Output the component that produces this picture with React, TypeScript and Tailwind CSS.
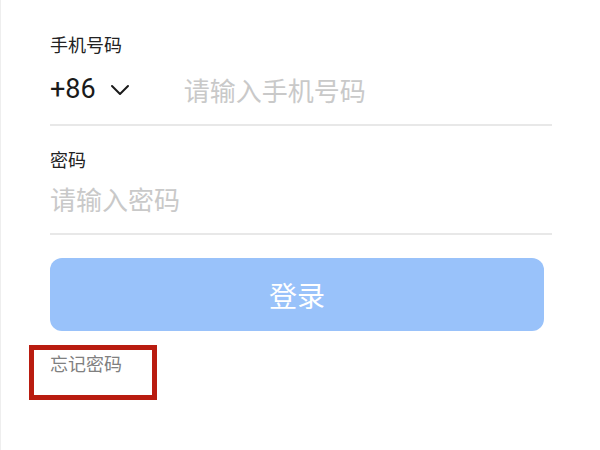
import { useState } from "react";

const font = { fontFamily: '"Noto Sans CJK SC", Roboto, sans-serif' };

export default function App() {
  const [phone, setPhone] = useState("");
  const [password, setPassword] = useState("");

  return (
    <div
      className="relative w-[600px] h-[450px] bg-white overflow-hidden border-l border-[#eeeeee]"
      style={font}
    >
      <div className="pt-[34px] pl-[49px] w-[551px]">
        <div className="h-[20px] text-[18px] leading-[20px] text-[#222222]">手机号码</div>

        <div className="h-[72px] flex items-center border-b-2 border-[#e8e8e8]">
          <button className="flex items-center gap-[14px] text-[27px] leading-none text-[#1a1a1a] font-[Roboto]">
            <span>+86</span>
            <svg width="20" height="12" viewBox="0 0 20 12" fill="none" className="mt-[2px]">
              <polyline
                points="2,2 10,10 18,2"
                stroke="#1a1a1a"
                strokeWidth="2"
                strokeLinecap="round"
                strokeLinejoin="round"
              />
            </svg>
          </button>
          <input
            value={phone}
            onChange={(e) => setPhone(e.target.value)}
            placeholder="请输入手机号码"
            className="ml-[54px] flex-1 text-[26px] leading-none outline-none bg-transparent text-[#222222] placeholder:text-[#c9c9c9]"
          />
        </div>

        <div className="mt-[23px] h-[20px] text-[18px] leading-[20px] text-[#222222]">密码</div>

        <div className="h-[66px] pb-[6px] flex items-center border-b-2 border-[#e8e8e8]">
          <input
            type="password"
            value={password}
            onChange={(e) => setPassword(e.target.value)}
            placeholder="请输入密码"
            className="flex-1 text-[26px] leading-none outline-none bg-transparent text-[#222222] placeholder:text-[#c9c9c9]"
          />
        </div>

        <button className="mt-[23px] w-[494px] h-[73px] rounded-[12px] bg-[#99c2fa] text-white text-[28px] flex items-center justify-center">
          登录
        </button>

        <div className="mt-[23px] h-[18px] text-[18px] leading-[18px] text-[#808080]">忘记密码</div>
      </div>

      <div className="absolute left-[28px] top-[345px] w-[128px] h-[55px] border-[5px] border-[#b91c10]" />
    </div>
  );
}
